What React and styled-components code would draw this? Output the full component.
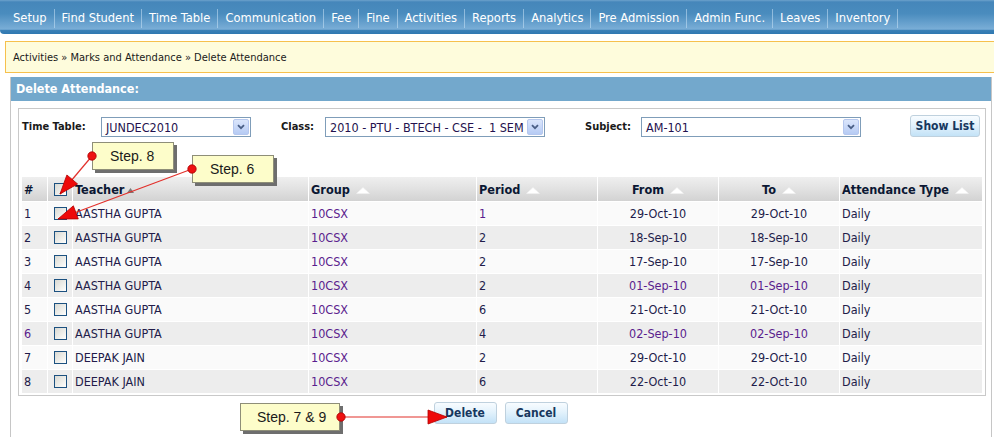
import React from 'react';
import styled, { createGlobalStyle } from 'styled-components';

const FONT = `"DejaVu Sans Condensed", "DejaVu Sans", "Liberation Sans", sans-serif`;

const Global = createGlobalStyle`
  html, body { margin: 0; padding: 0; background: #fff; }
  body { font-family: ${FONT}; font-stretch: condensed; }
  * { box-sizing: border-box; }
`;

const Page = styled.div`
  position: relative;
  width: 994px;
  height: 437px;
  overflow: hidden;
`;

const Nav = styled.nav`
  height: 34px;
  display: flex;
  align-items: center;
  padding: 2px 0 0 6px;
  background: linear-gradient(
    to bottom,
    #6da2cc 0,
    #4586ba 2px,
    #4a8cbe 40%,
    #7aaed7 86%,
    #3a80b6 89%,
    #2f78b1 100%
  );
  border-bottom-left-radius: 4px;
`;

const NavItem = styled.span`
  color: #fff;
  font-size: 12.8px;
  padding: 0 7px;
  line-height: 18px;
  white-space: nowrap;
`;

const NavSep = styled.span`
  width: 1px;
  height: 19px;
  background: rgba(200, 225, 245, 0.55);
`;

const Crumb = styled.div`
  margin: 7px 0 0 5px;
  height: 32px;
  border: 1px solid #f6c04d;
  border-right: none;
  background: #fefcdc;
  display: flex;
  align-items: center;
  padding-left: 7px;
  font-size: 11px;
  color: #1a1a1a;
`;

const Panel = styled.section`
  margin: 4px 0 0 10px;
  width: 982px;
  height: 360px;
  border-left: 1px solid #c6c6c6;
  border-right: 1px solid #c6c6c6;
`;

const PanelHead = styled.div`
  height: 24px;
  background: #73a8cc;
  color: #fff;
  font-weight: bold;
  font-size: 12.5px;
  line-height: 24px;
  padding-left: 5px;
`;

const PanelBody = styled.div`
  padding: 7px 0 0 7px;
`;

const Box = styled.div`
  width: 968px;
  border: 1px solid #c9c9c9;
  padding: 6px 2px 1px 2px;
  background: #fff;
`;

const FilterRow = styled.div`
  display: flex;
  align-items: center;
  height: 22px;
  padding-left: 1px;
`;

const Label = styled.span`
  width: ${(p) => p.$w}px;
  margin-left: ${(p) => p.$ml || 0}px;
  font-weight: bold;
  font-size: 11px;
  color: #1a1a1a;
  white-space: nowrap;
`;

const SelectBox = styled.div`
  width: ${(p) => p.$w}px;
  height: 20px;
  margin-top: 2px;
  border: 1px solid #7f9db9;
  background: #fff;
  display: flex;
  align-items: center;
`;

const SelectText = styled.span`
  flex: 1;
  padding-left: 4px;
  font-size: 12.5px;
  color: #24124e;
  white-space: pre;
  overflow: hidden;
`;

const SelectArrow = styled.span`
  width: 16px;
  height: 16px;
  margin-right: 1px;
  border: 1px solid #b5c7ee;
  border-radius: 2px;
  background: linear-gradient(#dbe6fc, #b6cbf4);
  display: flex;
  align-items: center;
  justify-content: center;
`;

const Button = styled.button`
  width: ${(p) => p.$w}px;
  height: 22px;
  margin-left: ${(p) => p.$ml || 0}px;
  border: 1px solid #bfd1de;
  border-radius: 3px;
  background: linear-gradient(#f8fcff 0%, #e3f2fc 45%, #c3e2f7 100%);
  font-family: ${FONT};
  font-stretch: condensed;
  font-weight: bold;
  font-size: 12px;
  color: #17375e;
  padding: 0;
  cursor: pointer;
`;

const Table = styled.table`
  margin-top: 39px;
  width: 962px;
  table-layout: fixed;
  border-collapse: separate;
  border-spacing: 1px;
`;

const Th = styled.th`
  height: 24px;
  padding: 0 2px;
  text-align: ${(p) => p.$align || 'left'};
  font-weight: bold;
  font-size: 12.6px;
  color: #0b1733;
  background: linear-gradient(#efefef 0%, #e3e3e3 45%, #d2d2d2 100%);
  white-space: nowrap;
`;

const Tr = styled.tr`
  background: ${(p) => (p.$even ? '#ededed' : '#fafafa')};
`;

const Td = styled.td`
  height: 23px;
  padding: 0 2px;
  text-align: ${(p) => p.$align || 'left'};
  font-size: 12.5px;
  color: ${(p) => (p.$purple ? '#5a1d8e' : '#221c4a')};
  white-space: nowrap;
`;

const Check = styled.span`
  display: block;
  width: 13px;
  height: 13px;
  margin: 0 auto;
  border: 1px solid #1c5180;
  background: linear-gradient(135deg, #d9d9d3, #f7f7f4 80%, #fff);
`;

const Sort = styled.svg`
  margin-left: ${(p) => p.$ml || 6}px;
  vertical-align: middle;
`;

const ButtonRow = styled.div`
  display: flex;
  justify-content: center;
  gap: 8px;
  margin-top: 6px;
  padding-right: 8px;
`;

const Callout = styled.div`
  position: absolute;
  left: ${(p) => p.$x}px;
  top: ${(p) => p.$y}px;
  width: ${(p) => p.$w}px;
  height: 28px;
  padding-left: ${(p) => p.$pl}px;
  background: #fdfdca;
  border: 1px solid #8e8e78;
  box-shadow: 3px 3px 0 #6e6e6e;
  display: flex;
  align-items: center;
  font-family: "Liberation Sans", Arial, sans-serif;
  font-size: 14px;
  color: #1b1b1b;
  white-space: nowrap;
`;

const Overlay = styled.svg`
  position: absolute;
  left: 0;
  top: 0;
  pointer-events: none;
`;

const navItems = [
  'Setup', 'Find Student', 'Time Table', 'Communication', 'Fee', 'Fine',
  'Activities', 'Reports', 'Analytics', 'Pre Admission', 'Admin Func.',
  'Leaves', 'Inventory',
];

const rows = [
  { n: 1, t: 'AASTHA GUPTA', p: '1', f: '29-Oct-10', pp: true },
  { n: 2, t: 'AASTHA GUPTA', p: '2', f: '18-Sep-10' },
  { n: 3, t: 'AASTHA GUPTA', p: '2', f: '17-Sep-10' },
  { n: 4, t: 'AASTHA GUPTA', p: '2', f: '01-Sep-10', dp: true },
  { n: 5, t: 'AASTHA GUPTA', p: '6', f: '21-Oct-10' },
  { n: 6, t: 'AASTHA GUPTA', p: '4', f: '02-Sep-10', dp: true, np: true },
  { n: 7, t: 'DEEPAK JAIN', p: '2', f: '29-Oct-10' },
  { n: 8, t: 'DEEPAK JAIN', p: '6', f: '22-Oct-10' },
];

const Chevron = () => (
  <svg width="8" height="6" viewBox="0 0 8 6">
    <path d="M1 1.2 L4 4.2 L7 1.2" fill="none" stroke="#4a5f86" strokeWidth="1.8" />
  </svg>
);

const Select = ({ w, text }) => (
  <SelectBox $w={w}>
    <SelectText>{text}</SelectText>
    <SelectArrow>
      <Chevron />
    </SelectArrow>
  </SelectBox>
);

const SortUp = ({ ml }) => (
  <Sort $ml={ml} width="14" height="7" viewBox="0 0 14 7">
    <polygon points="0.5,6.5 7,0.5 13.5,6.5" fill="#ffffff" stroke="#f2f2f2" strokeWidth="0.5" />
  </Sort>
);

const SortActive = () => (
  <Sort $ml={3} width="7" height="5" viewBox="0 0 7 5">
    <polygon points="0,5 3.5,0 7,5" fill="#7a7a7a" />
  </Sort>
);

function arrowHead(x1, y1, x2, y2, len = 19, half = 7) {
  const dx = x2 - x1;
  const dy = y2 - y1;
  const d = Math.hypot(dx, dy);
  const ux = dx / d;
  const uy = dy / d;
  const bx = x2 - ux * len;
  const by = y2 - uy * len;
  const px = -uy * half;
  const py = ux * half;
  return `${x2},${y2} ${bx + px},${by + py} ${bx - px},${by - py}`;
}

const pointers = [
  { x1: 92, y1: 156, x2: 60, y2: 194 },
  { x1: 192, y1: 169, x2: 58, y2: 219 },
  { x1: 341, y1: 417, x2: 447, y2: 417 },
];

export default function App() {
  return (
    <>
      <Global />
      <Page>
        <Nav>
          {navItems.map((n) => (
            <React.Fragment key={n}>
              <NavItem>{n}</NavItem>
              <NavSep />
            </React.Fragment>
          ))}
        </Nav>
        <Crumb>Activities » Marks and Attendance » Delete Attendance</Crumb>
        <Panel>
          <PanelHead>Delete Attendance:</PanelHead>
          <PanelBody>
            <Box>
              <FilterRow>
                <Label $w={79}>Time Table:</Label>
                <Select w={150} text="JUNDEC2010" />
                <Label $w={44} $ml={30}>Class:</Label>
                <Select w={220} text="2010 - PTU - BTECH - CSE -  1 SEM" />
                <Label $w={56} $ml={40}>Subject:</Label>
                <Select w={220} text="AM-101" />
                <Button $w={70} $ml={49}>Show List</Button>
              </FilterRow>
              <Table>
                <colgroup>
                  <col style={{ width: 25 }} />
                  <col style={{ width: 24 }} />
                  <col style={{ width: 235 }} />
                  <col style={{ width: 167 }} />
                  <col style={{ width: 120 }} />
                  <col style={{ width: 120 }} />
                  <col style={{ width: 120 }} />
                  <col />
                </colgroup>
                <thead>
                  <tr>
                    <Th>#</Th>
                    <Th $align="center"><Check /></Th>
                    <Th>Teacher<SortActive /></Th>
                    <Th>Group<SortUp /></Th>
                    <Th>Period<SortUp /></Th>
                    <Th $align="center">From<SortUp /></Th>
                    <Th $align="center">To<SortUp /></Th>
                    <Th>Attendance Type<SortUp /></Th>
                  </tr>
                </thead>
                <tbody>
                  {rows.map((r, i) => (
                    <Tr key={r.n} $even={i % 2 === 1}>
                      <Td $purple={r.np}>{r.n}</Td>
                      <Td><Check /></Td>
                      <Td>{r.t}</Td>
                      <Td $purple>10CSX</Td>
                      <Td $purple={r.pp}>{r.p}</Td>
                      <Td $align="center" $purple={r.dp}>{r.f}</Td>
                      <Td $align="center" $purple={r.dp}>{r.f}</Td>
                      <Td>Daily</Td>
                    </Tr>
                  ))}
                </tbody>
              </Table>
            </Box>
            <ButtonRow>
              <Button $w={63}>Delete</Button>
              <Button $w={63}>Cancel</Button>
            </ButtonRow>
          </PanelBody>
        </Panel>

        <Callout $x={92} $y={142} $w={82} $pl={17}>Step. 8</Callout>
        <Callout $x={192} $y={155} $w={82} $pl={17}>Step. 6</Callout>
        <Callout $x={240} $y={403} $w={100} $pl={16}>Step. 7 &amp; 9</Callout>

        <Overlay width="994" height="437" viewBox="0 0 994 437">
          {pointers.map((p, i) => (
            <g key={i}>
              <line x1={p.x1} y1={p.y1} x2={p.x2} y2={p.y2} stroke="#e2302b" strokeWidth="1.2" />
              <polygon points={arrowHead(p.x1, p.y1, p.x2, p.y2)} fill="#ee0a0a" stroke="#b00000" strokeWidth="0.8" />
              <circle cx={p.x1} cy={p.y1} r="4.2" fill="#ee1111" stroke="#a80000" strokeWidth="0.8" />
            </g>
          ))}
        </Overlay>
      </Page>
    </>
  );
}
